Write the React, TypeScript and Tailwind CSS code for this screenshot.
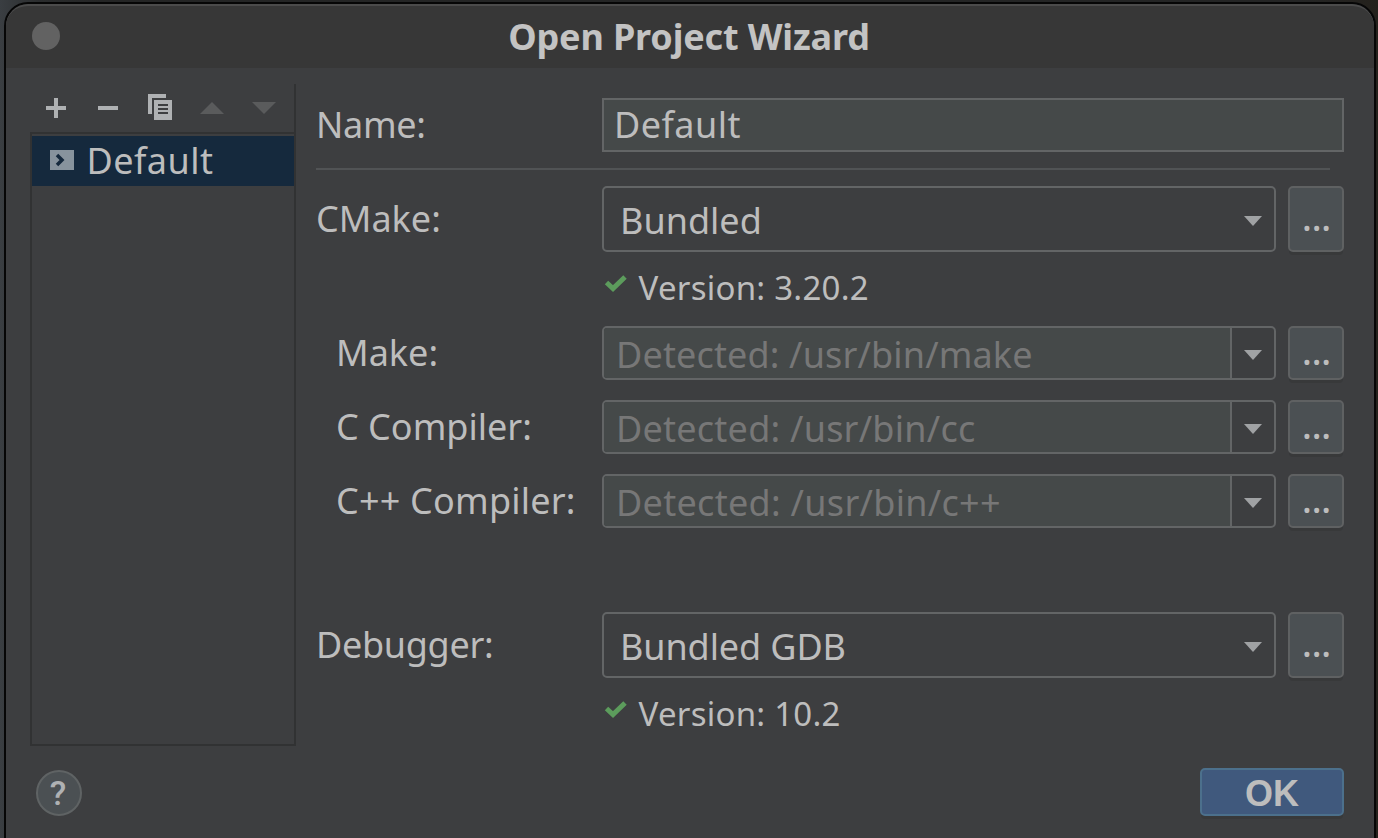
import type { ReactNode } from "react";

function Caret() {
  return (
    <svg width="18" height="10" viewBox="0 0 18 10" className="block shrink-0">
      <path d="M0 0H18L9 10Z" fill="#a0a2a4" />
    </svg>
  );
}

function Browse({ tall = false }: { tall?: boolean }) {
  return (
    <button
      aria-label="Browse"
      className={`block w-14 shrink-0 rounded-[5px] border-2 border-[#5f6162] bg-[#4b5053] pl-px text-center text-[36px] font-medium leading-[48px] tracking-[-0.1px] shadow-[0_4px_0_-1px_#38393a] ${tall ? "h-[66px] pb-[2px]" : "h-[54px] pb-[2px]"}`}
    >
      ...
    </button>
  );
}

function Label({ className = "", children }: { className?: string; children: ReactNode }) {
  return (
    <div className={`w-[286px] shrink-0 whitespace-nowrap pb-px text-[36px] leading-[48px] ${className}`}>
      {children}
    </div>
  );
}

function Version({ children }: { children: ReactNode }) {
  return (
    <div className="ml-[288px] flex h-[74px] items-start pt-[14px]">
      <svg width="24" height="20" viewBox="0 0 24 20" className="mt-[8px] block shrink-0">
        <path d="M2.5 8.5L9 14.5L21 3" fill="none" stroke="#5c9c5c" strokeWidth="5" />
      </svg>
      <span className="ml-[10.5px] whitespace-nowrap text-[33px] leading-[44px] tracking-[0.25px]">{children}</span>
    </div>
  );
}

function Select({ className = "", children }: { className?: string; children: ReactNode }) {
  return (
    <div className="flex h-[66px] w-[674px] items-center justify-between rounded-[5px] border-2 border-[#636566] pl-4 pr-[12px] pt-1">
      <span className={`whitespace-nowrap text-[36px] leading-[48px] ${className}`}>{children}</span>
      <Caret />
    </div>
  );
}

function Detected({ className = "tracking-[0.24px]", children }: { className?: string; children: ReactNode }) {
  return (
    <div className="flex h-[54px] w-[674px] overflow-hidden rounded-[5px] border-2 border-[#636566]">
      <div className={`flex-1 whitespace-nowrap bg-[#454949] pl-[12px] text-[36px] leading-[53px] text-[#777777] ${className}`}>
        {children}
      </div>
      <div className="flex w-[44px] items-center justify-center border-l-2 border-[#636566] pt-[4px]">
        <Caret />
      </div>
    </div>
  );
}

export default function App() {
  return (
    <div className="h-[838px] w-[1378px] overflow-hidden bg-[#242525] bg-[linear-gradient(90deg,#3a3e42_0,#2a2c2d_40px,#242525_100px,#242525_1300px,#24211c_1378px)] pl-[4px] pt-[2px] font-['Noto_Sans',sans-serif] text-[#bdbdbd]">
      <div className="h-[860px] w-[1372px] overflow-hidden rounded-t-[24px] border-2 border-[#060606] bg-[#3d3e40]">
        <header className="flex h-[64px] items-center rounded-t-[22px] border-t-2 border-[#4b4b4b] bg-[#373737] pl-[26px]">
          <div className="mb-[2px] size-7 shrink-0 rounded-full bg-[#626262]" />
          <h1 className="w-full pr-[56px] text-center text-[36px] font-bold leading-[48px] tracking-[-0.15px] text-[#c3c3c3]">
            <span>Open Project Wizard</span>
          </h1>
        </header>

        <main className="flex h-[678px] pl-6 pt-4">
          <aside className="flex w-[266px] shrink-0 flex-col border-r-2 border-[#313233]">
            <div className="flex h-12 items-center gap-[28px] pl-[14px] text-[#afb1b3]">
              <svg width="24" height="24" viewBox="0 0 24 24" className="shrink-0">
                <path d="M2 12H22M12 2V22" stroke="#afb1b3" strokeWidth="4" />
              </svg>
              <svg width="24" height="24" viewBox="0 0 24 24" className="shrink-0">
                <path d="M2 12H22" stroke="#afb1b3" strokeWidth="4" />
              </svg>
              <svg width="24" height="26" viewBox="0 0 24 26" className="mb-[2px] shrink-0">
                <path d="M0 0H18V4H4V20H0Z M6 6H24V26H6Z" fill="#afb1b3" />
                <path d="M10 11H20M10 15H20M10 19H20" stroke="#3d3e40" strokeWidth="2" />
              </svg>
              <svg width="24" height="12" viewBox="0 0 24 12" className="shrink-0">
                <path d="M0 12H24L12 0Z" fill="#5a5b5c" />
              </svg>
              <svg width="24" height="12" viewBox="0 0 24 12" className="shrink-0">
                <path d="M0 0H24L12 12Z" fill="#5a5b5c" />
              </svg>
            </div>
            <div className="flex-1 border-2 border-r-0 border-[#313233] pt-[2px]">
              <div className="flex h-[50px] items-center bg-[#15293d] pl-[18px]">
                <svg width="24" height="20" viewBox="0 0 24 20" className="mb-[2px] shrink-0">
                  <path d="M0 0H24V20H0Z" fill="#87939d" />
                  <path d="M7 5L12 10L7 15" fill="none" stroke="#15293d" strokeWidth="3.5" />
                </svg>
                <span className="ml-[12.5px] text-[36px] leading-[48px] tracking-[0.45px]">Default</span>
              </div>
            </div>
          </aside>

          <section className="ml-5 w-[1028px] pt-[14px]">
            <div className="flex h-[54px] items-center">
              <Label className="tracking-[-0.3px]">Name:</Label>
              <div className="h-[54px] flex-1 border-2 border-[#636566] bg-[#454949] pl-[10px] pt-px text-[36px] leading-[48px] tracking-[0.45px]">
                <span>Default</span>
              </div>
            </div>
            <div className="mt-4 h-[2px] w-[1014px] bg-[#515355]" />
            <div className="mt-4 flex h-[66px] items-center">
              <Label>CMake:</Label>
              <Select>Bundled</Select>
              <div className="ml-3"><Browse tall /></div>
            </div>
            <Version>Version: 3.20.2</Version>
            <div className="flex flex-col gap-5">
              <div className="flex h-[54px] items-center">
                <Label className="pl-5">Make:</Label>
                <Detected className="tracking-[0.15px]">Detected: /usr/bin/make</Detected>
                <div className="ml-3"><Browse /></div>
              </div>
              <div className="flex h-[54px] items-center">
                <Label className="pl-5">C Compiler:</Label>
                <Detected>Detected: /usr/bin/cc</Detected>
                <div className="ml-3"><Browse /></div>
              </div>
              <div className="flex h-[54px] items-center">
                <Label className="pl-5 tracking-[0.2px]">C++ Compiler:</Label>
                <Detected className="tracking-[0.3px]">Detected: /usr/bin/c++</Detected>
                <div className="ml-3"><Browse /></div>
              </div>
            </div>
            <div className="mt-[84px] flex h-[66px] items-center">
              <Label className="tracking-[-0.3px]">Debugger:</Label>
              <Select className="tracking-[-0.1px]">Bundled GDB</Select>
              <div className="ml-3"><Browse tall /></div>
            </div>
            <Version>Version: 10.2</Version>
          </section>
        </main>

        <footer className="flex justify-between pl-[30px] pr-[30px] pt-[22px]">
          <button
            aria-label="Help"
            className="mt-[2px] flex size-[46px] items-center justify-center rounded-full border-2 border-[#5f6364] bg-[#4b5053] pb-px pr-[2px]"
          >
            <span className="font-['Roboto',sans-serif] text-[34px] font-medium leading-none text-[#afb1b3]">?</span>
          </button>
          <button className="h-12 w-36 rounded-[5px] border-2 border-[#4c708c] bg-[#40597d] pt-px text-center font-['Liberation_Sans',sans-serif] text-[36px] font-bold leading-[46px] shadow-[0_4px_0_-1px_#38393a]">
            OK
          </button>
        </footer>
      </div>
    </div>
  );
}
